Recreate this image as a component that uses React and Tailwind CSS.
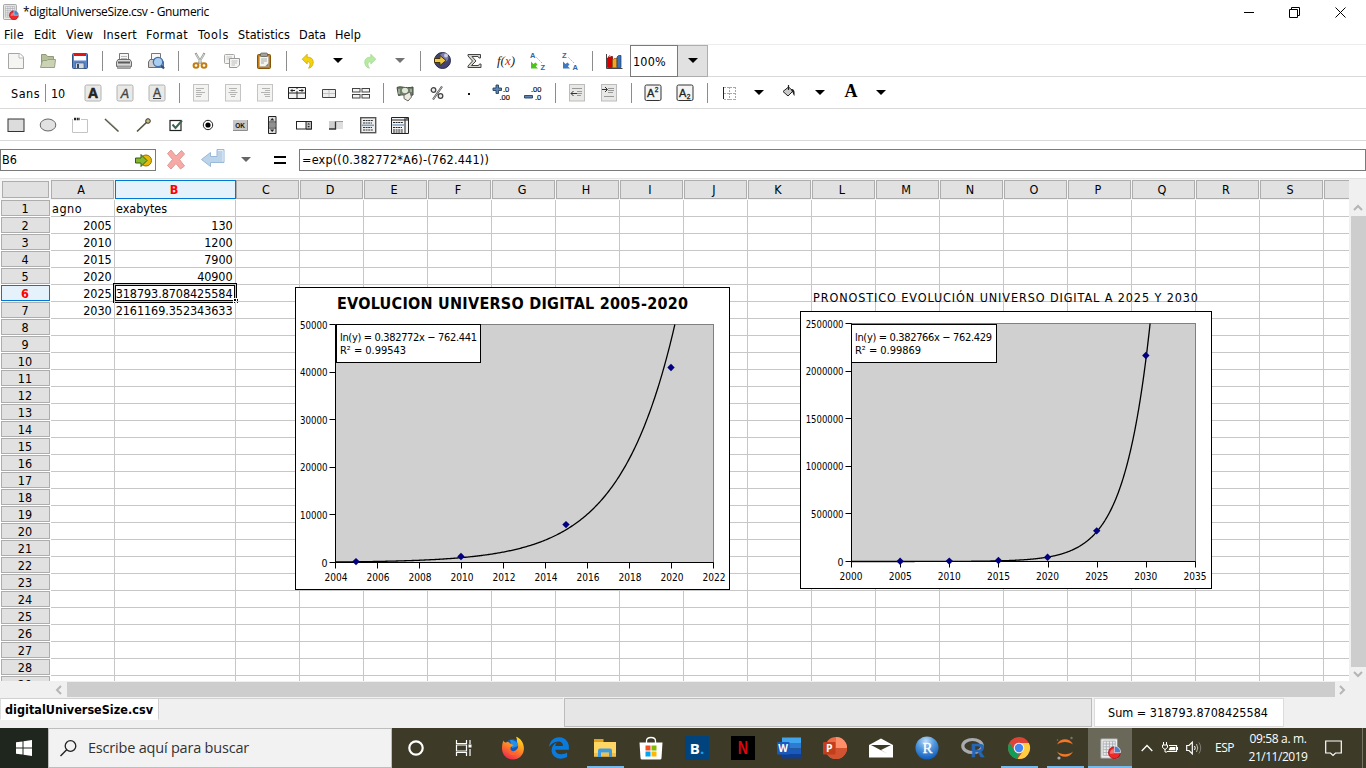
import React, { useLayoutEffect, useRef } from "react";

const UI = "font-['DejaVu_Sans_Condensed','DejaVu_Sans',sans-serif] font-stretch-condensed";
const SEGOE = "font-['Open_Sans','Noto_Sans',sans-serif] font-stretch-normal";

/* Text whose letter spacing is adjusted so that it takes exactly w pixels. */
function Fit({ w, className = "", children }) {
  const ref = useRef(null);
  useLayoutEffect(() => {
    const el = ref.current;
    el.style.letterSpacing = "0px";
    const n = el.textContent.length;
    const gap = (w - el.getBoundingClientRect().width) / n;
    el.style.letterSpacing = gap + "px";
  }, [w, children]);
  return (
    <span ref={ref} className={"inline-block whitespace-pre " + className}>
      {children}
    </span>
  );
}

function Ico({ children, s = 18, className = "" }) {
  return (
    <svg width={s} height={s} viewBox={`0 0 ${s} ${s}`} className={"shrink-0 " + className}>
      {children}
    </svg>
  );
}

const Slot = ({ children }) => <div className="flex h-full w-8 shrink-0 items-center justify-center">{children}</div>;
const Sep = () => (
  <div className="flex h-full w-3 shrink-0 items-center justify-center">
    <div className="h-5 w-px bg-[#8c8c8c]" />
  </div>
);
const Caret = ({ color = "#000" }) => (
  <div className="flex h-full w-7 shrink-0 items-center justify-center">
    <svg width="10" height="5" viewBox="0 0 10 5"><path d="M0 0H10L5 5Z" fill={color} /></svg>
  </div>
);

/* ---------- toolbar 1 ---------- */
const NewI = () => <Ico><path d="M1.5 1.5H13L16.5 5V16.5H1.5Z" fill="#f5f5f3" stroke="#a5a5a3" /><path d="M12 1.5V6H16.5" fill="#fff" stroke="#bbb" /></Ico>;
const OpenI = () => <Ico><path d="M2.5 14V2.5H7L8.5 4.5H14.5V14Z" fill="#b5bf9a" stroke="#8f9a78" /><path d="M1.5 15.5L3.5 8.5H8L9 7.500H16.500L15.500 15.500Z" fill="#ccd3b4" stroke="#97a280" /></Ico>;
const SaveI = () => (
  <Ico><rect x="1.500" y="1.500" width="15" height="15" rx="1" fill="#5b87c8" stroke="#2f548c" />
    <rect x="3" y="1" width="12" height="7.500" fill="#fff" /><rect x="3" y="1" width="12" height="3" fill="#e01616" />
    <path d="M4.500 11H13V16.500H4.500Z" fill="#d5dade" stroke="#3b4c66" strokeWidth=".6" /><rect x="6" y="12" width="2" height="4" fill="#364961" /></Ico>
);
const PrintI = () => (
  <Ico><path d="M4.500 8V1.500H13.500V8" fill="#f7f7f7" stroke="#777" /><path d="M6 4.500H12M6 6.500H12" stroke="#bbb" />
    <path d="M1.500 10L3 7.500H15L16.500 10V14.500H1.500Z" fill="#d8d8d8" stroke="#6d6d6d" /><path d="M3 10.500H15" stroke="#5b5b5b" strokeWidth="2" /><rect x="2.500" y="14" width="13" height="2.500" fill="#aaa" stroke="#777" strokeWidth=".6" /></Ico>
);
const PreviewI = () => (
  <Ico><path d="M4.500 8V1.500H13.500V8" fill="#f7f7f7" stroke="#777" /><path d="M1.500 10L3 7.500H15L16.500 10V15.500H1.500Z" fill="#d0d0d0" stroke="#6d6d6d" />
    <circle cx="11" cy="10" r="4.700" fill="#a9cdf0" stroke="#4471a8" strokeWidth="1.300" /><path d="M14.300 13.500L17 16.500" stroke="#2b5288" strokeWidth="2.200" /></Ico>
);
const CutI = () => (
  <Ico><path d="M4.500 1L10.500 11.500M13.500 1L7.500 11.500" stroke="#989e97" strokeWidth="2.200" /><path d="M5 2L10 11M13 2L8 11" stroke="#e2e4e0" strokeWidth=".8" />
    <ellipse cx="5" cy="13.500" rx="2.400" ry="2.200" fill="none" stroke="#c17d11" strokeWidth="2" /><ellipse cx="13" cy="13.500" rx="2.400" ry="2.200" fill="none" stroke="#c17d11" strokeWidth="2" /></Ico>
);
const CopyI = () => (
  <Ico><rect x="1.500" y="2.500" width="10" height="9" rx="1" fill="#f3f3f1" stroke="#a9a9a7" /><path d="M3.500 5H9M3.500 7H9" stroke="#c5c5c5" />
    <path d="M6.500 6.500H16.500V13L14 15.500H6.500Z" fill="#f5f5f3" stroke="#999" /><path d="M8.500 9H14.500M8.500 11H14M8.500 13H12" stroke="#bdbdbd" /></Ico>
);
const PasteI = () => (
  <Ico><rect x="2.500" y="2.500" width="13" height="14" rx="1" fill="#c17d11" stroke="#865307" /><rect x="4.500" y="4.500" width="9" height="10" fill="#f4f4f1" stroke="#aaa" strokeWidth=".5" />
    <rect x="5.500" y="1" width="7" height="3.500" rx="1" fill="#a0a19c" stroke="#595a56" strokeWidth=".7" /><path d="M6 7H12M6 9H12M6 11H9" stroke="#aaa" /><path d="M10 14.500L13.500 11V14.500Z" fill="#888a85" /></Ico>
);
const UndoI = ({ c = "#f4d20c", s = "#c3a000", flip }) => (
  <Ico className={flip ? "-scale-x-100" : ""}><path d="M3.200 7.200L8.200 2.200V5.200C13 4.800 15.300 8.500 13.800 12.500C13 14.800 11.500 16 9.500 16.200C11.600 13.500 11.800 9.800 8.200 9.600V12Z" fill={c} stroke={s} strokeWidth=".7" /></Ico>
);
const GlobeI = () => (
  <Ico s={19}><circle cx="9.500" cy="9.500" r="8" fill="#43436f" stroke="#27274b" /><circle cx="11" cy="6.500" r="4.500" fill="#8e8fbd" opacity=".75" /><circle cx="13" cy="4.500" r="2" fill="#e1e1f2" opacity=".8" />
    <path d="M1.500 7.500H7V4.500L13 9.500L7 14.500V11.500H1.500Z" fill="#efc846" stroke="#40330d" /></Ico>
);
const SumI = () => <Ico><path d="M3 2.500H15.500V6H14L13 4.500H7L11 9L6.500 13.500H13.500L14.500 12H16V15.500H3V14L7.500 9L3 4Z" fill="#d4d4c8" stroke="#444" /></Ico>;
const Arr = ({ c }) => <path d="M2 9.500V16.500H9L6.800 14.300L8.500 12.600L6.500 10.500L4.500 12Z" fill={c} />;
const SortI = ({ a, b, c }) => (
  <Ico><g className="font-['Liberation_Sans',sans-serif] font-bold"><text x="1" y="6" fontSize="7.500" fill="#3465a4">{a}</text><text x="11.500" y="17.500" fontSize="7.500" fill="#3465a4">{b}</text></g>
    <path d="M7.500 5.500L13 11" stroke="#7fa0cc" strokeDasharray="1.500 1.500" /><Arr c={c} /></Ico>
);
const ChartI = () => (
  <Ico><path d="M1.500 2V16.500H17.500" stroke="#444" fill="none" /><path d="M2.500 6L4.500 4.500H7.500V15.500H2.500Z" fill="#d40000" stroke="#6d0000" strokeWidth=".7" /><path d="M3 5L5 3.500L6.500 5" fill="#fbb" stroke="#800" strokeWidth=".5" />
    <path d="M7.500 8L9 6.500H12V15.500H7.500Z" fill="#f5a524" stroke="#8f5902" strokeWidth=".7" /><path d="M12 5L13.500 3.500H16V15.500H12Z" fill="#3a71b5" stroke="#1a3c6c" strokeWidth=".7" /></Ico>
);

/* ---------- toolbar 2 ---------- */
const Boxed = ({ children }) => <Ico s={18}><rect x="1" y="1" width="16" height="16" rx="1.500" fill="#e9e9e7" stroke="#b2b2b0" />{children}</Ico>;
const BoldI = () => <Boxed><text x="9" y="14" fontSize="14" textAnchor="middle" fill="#222" stroke="#222" strokeWidth=".6" className="font-['Liberation_Sans',sans-serif] font-bold">A</text></Boxed>;
const ItalicI = () => <Boxed><text x="9" y="13.500" fontSize="12.500" textAnchor="middle" fill="#444" stroke="#444" strokeWidth=".4" className="font-['Liberation_Sans',sans-serif] italic">A</text></Boxed>;
const UnderI = () => <Boxed><text x="9" y="12.500" fontSize="12" textAnchor="middle" fill="#444" stroke="#444" strokeWidth=".4" className="font-['Liberation_Sans',sans-serif]">A</text><path d="M5 14.500H13" stroke="#333" /></Boxed>;
const AlignI = ({ k }) => {
  const d = { l: "M4 4.500H12M4 6.500H9M4 8.500H13M4 10.500H10M4 12.500H9", c: "M5 4.500H13M6.500 6.500H11.500M4.500 8.500H13.500M6 10.500H12M7 12.500H11", r: "M6 4.500H14M9 6.500H14M5 8.500H14M8 10.500H14M9 12.500H14" }[k];
  return <Ico><rect x="1.500" y=".5" width="15" height="16.500" fill="#f3f3f2" stroke="#c4c4c2" /><path d={d} stroke="#b4b4b2" /></Ico>;
};
const CenterAcross = () => <Ico><path d="M.5 3.500H17.500V14.500H.5ZM.5 9H17.500M9 9V14.500M9 3.500V5M9 7V9" fill="#f2f2f2" stroke="#222" /><path d="M3 6.500H7M11 6.500H15" stroke="#222" /><path d="M2 6.500L4.500 5V8ZM16 6.500L13.500 5V8Z" fill="#222" /></Ico>;
const MergeI = () => <Ico><path d="M2.500 5.500H15.500V13.500H2.500Z" fill="#eee" stroke="#444" /><path d="M9 6V13M3 9.500H15" stroke="#c2c2c2" /></Ico>;
const SplitI = () => <Ico>{[[.5, 4.500], [10, 4.500], [.5, 10.500], [10, 10.500]].map(([x, y]) => <rect key={x + "-" + y} x={x} y={y} width="7.500" height="3.500" fill="#f3f3f3" stroke="#444" />)}</Ico>;
const MoneyI = () => (
  <Ico><path d="M1 3.500C5 1.500 9 5 17 3V11C12 13 7 9.500 2.500 11.500Z" fill="#70806a" stroke="#3f4a3c" /><ellipse cx="9" cy="6.500" rx="3" ry="2.700" fill="#dfe8d8" /><path d="M3 5V10M15 5V8" stroke="#cbd6c4" />
    <path d="M8 11L14 8L15.500 13L12 17L8 14.500Z" fill="#ece9dd" stroke="#666" /></Ico>
);
const PercentI = () => <Ico><path d="M14 2.500L5 15.500" stroke="#444" strokeWidth="2" /><path d="M14 2.500L5 15.500" stroke="#eee" strokeWidth=".7" /><circle cx="5.500" cy="6" r="2.300" fill="#eee" stroke="#444" strokeWidth="1.300" /><circle cx="12.500" cy="12" r="2.300" fill="#eee" stroke="#444" strokeWidth="1.300" /></Ico>;
const DecI = ({ plus }) => (
  <Ico><path d={plus ? "M4 1H6.500V4H9.500V6.500H6.500V9.500H4V6.500H1V4H4Z" : "M.5 11.500H8.500V14H.5Z"} fill="#5c84b4" stroke="#26415f" strokeWidth=".9" />
    <g className="font-['Liberation_Sans',sans-serif]" fontSize="7.500" fill="#111" stroke="#111" strokeWidth=".2"><text x={plus ? 11 : 7} y="8">{plus ? ".0" : ".00"}</text><text x={plus ? 7.500 : 11} y="15.500">{plus ? ".00" : ".0"}</text></g></Ico>
);
const IndentI = ({ right }) => (
  <Ico><rect x="1.500" y=".5" width="15" height="16.500" fill="#e8e8e6" stroke="#bcbcba" /><path d={right ? "M8 4.500H14M8 6.500H14M8 8.500H13M4 12.500H14" : "M4 4.500H14M9 7.500H14M9 9.500H14M9 11.500H13"} stroke="#999" />
    {right ? <path d="M2 5.500H7M5 3L7.500 5.500L5 8" stroke="#333" fill="none" /> : <path d="M9 9.500H3M5.500 7L3 9.500L5.500 12" stroke="#333" fill="none" />}</Ico>
);
const SupI = ({ sub }) => (
  <Ico><rect x="1" y="1" width="16" height="15.500" rx="1.500" fill="#f4f4f4" stroke="#333" /><g className="font-['Liberation_Sans',sans-serif]" fill="#222"><text x="3" y="12.500" fontSize="11" stroke="#222" strokeWidth=".3">A</text><text x="10.800" y={sub ? 14.500 : 8} fontSize="6.500" stroke="#222" strokeWidth=".3">2</text></g></Ico>
);
const BorderI = () => <Ico><path d="M3.500 3V15" stroke="#222" /><path d="M4 3.500H16M4 9.500H16M4 15.500H16M9.500 3V16M15.500 3V16" stroke="#a8a8a8" strokeDasharray="2 1" fill="none" /></Ico>;
const BucketI = () => <Ico s={14}><path d="M1 7.500L6.500 3L11 7L6 12Z" fill="#c9c9c9" stroke="#222" /><path d="M6.500 6V1" stroke="#222" strokeWidth="1.200" /><path d="M9 5C12 5 13 6.500 12.500 12C11 11 11 8 9.500 7Z" fill="#222" /></Ico>;

/* ---------- toolbar 3 ---------- */
const T3 = [
  <Ico><rect x="1" y="3" width="16" height="12.500" fill="#dcdcdc" stroke="#333" /></Ico>,
  <Ico><ellipse cx="9" cy="9" rx="7.800" ry="6" fill="#e2e2e2" stroke="#666" /></Ico>,
  <Ico><path d="M1.500 3V16.500H16.500V3.500H10" fill="none" stroke="#c4c4c4" /><path d="M3 3H9" stroke="#222" strokeWidth="2.500" strokeDasharray="2 .7" /></Ico>,
  <Ico><path d="M2 3L15.500 15.500" stroke="#55564a" strokeWidth="1.700" /><path d="M2.500 2.500L15.500 14.500" stroke="#b4b39d" strokeWidth=".6" /></Ico>,
  <Ico><path d="M2 15.500L14 4" stroke="#56533f" strokeWidth="1.700" /><circle cx="13" cy="5" r="2.300" fill="#cabc78" stroke="#333" /></Ico>,
  <Ico><rect x="3" y="4.500" width="11" height="10" fill="#fff" stroke="#222" strokeWidth="1.200" /><path d="M5.500 8.500L8.500 12L15 4.500" stroke="#3c6651" strokeWidth="2" fill="none" /></Ico>,
  <Ico><circle cx="9" cy="9" r="4.700" fill="#fff" stroke="#222" /><circle cx="9" cy="9" r="2.600" fill="#000" /></Ico>,
  <Ico><path d="M2 4H16V14.500H2Z" fill="#c7c7c7" /><path d="M2 14.500H16.500V4" stroke="#8d8d8d" fill="none" /><text x="9" y="12" fontSize="6.500" textAnchor="middle" fill="#111" className="font-['Liberation_Sans',sans-serif] font-bold">OK</text></Ico>,
  <Ico><path d="M5.500 .5H13V17.500H5.500ZM5.500 6H13M5.500 12H13" fill="#ddd" stroke="#222" /><path d="M7 4.500L9.200 2L11.400 4.500ZM7 13.500H11.400L9.200 16Z" fill="#222" /><path d="M6 8H12.500M6 10H12.500" stroke="#444" /></Ico>,
  <Ico><rect x="1.500" y="5.500" width="15" height="7.500" fill="#fff" stroke="#222" /><path d="M11 5.500H16.500V13H11Z" fill="#bbb" stroke="#222" /><path d="M12.500 8.500L13.700 7L14.900 8.500ZM12.500 10H14.900L13.700 11.500Z" fill="#222" /></Ico>,
  <Ico><rect x="2" y="5" width="14" height="8" fill="#dedede" /><rect x="2" y="5" width="7" height="8" fill="#cfcfcf" /><path d="M2 13H8.500V5.500" stroke="#333" fill="none" strokeWidth="1.300" /><path d="M9 5.500H16" stroke="#999" /></Ico>,
  <Ico><rect x="1.700" y="1.700" width="15" height="15" fill="#eee" stroke="#555" strokeWidth="1.400" /><path d="M4 4.500H14M4 7H13M4 11.500H13M4 14H14" stroke="#333" strokeDasharray="2 .6" /><path d="M3 9.300H15" stroke="#7f9fc0" strokeWidth="1.500" /></Ico>,
  <Ico><path d="M.5 1.500H17.500V17.500H.5ZM.5 4H17.500M14 1.500V17.500" fill="#f5f5f5" stroke="#222" /><path d="M2 6.500H12M2 11.500H11M2 14H12M2 16H12" stroke="#222" strokeDasharray="2 .6" /><path d="M1.500 9H13" stroke="#7f9fc0" strokeWidth="1.500" /><path d="M15 2.800H17" stroke="#222" /></Ico>,
];

const GnumI = ({ s = 16 }) => (
  <svg width={s} height={s} viewBox="0 0 20 20" className="shrink-0">
    <rect x=".7" y=".7" width="16" height="18.600" rx="1" fill="#eeeeec" stroke="#8f918c" />
    <path d="M3 3H14.500V16.500H3ZM3 5.700H14.500M3 8.400H14.500M3 11.100H14.500M3 13.800H14.500M6 3V16.500M9 3V16.500M12 3V16.500" fill="none" stroke="#a3aab2" strokeWidth=".8" />
    <circle cx="13.700" cy="14" r="5.600" fill="#ef2929" stroke="#a40000" strokeWidth=".7" /><path d="M13.700 14V7.700A6 6 0 0 1 19.700 14Z" fill="#4d84c4" stroke="#fff" strokeWidth=".6" /><path d="M9.500 15A4.500 4.500 0 0 1 13 10.500L13.300 14.800Z" fill="#fff" opacity=".35" />
  </svg>
);

/* ---------- sheet ---------- */
const COLS = "ABCDEFGHIJKLMNOPQRST".split("");
const DATA = [
  ["agno", "exabytes"], ["2005", "130"], ["2010", "1200"], ["2015", "7900"], ["2020", "40900"],
  ["2025", "318793.8708425584"], ["2030", "2161169.352343633"],
];
const DIGIT = 7.06;

function Cell({ r, c }) {
  const v = DATA[r] && DATA[r][c];
  const selected = r === 5 && c === 1;
  const w = v && (r === 0 ? [30, 51][c] : v.length * DIGIT - (v.includes(".") ? 3.200 : 0));
  return (
    <div className={"relative h-[17px] shrink-0 border-r border-b border-[#c7c7c7] pt-px leading-4 " + (c === 1 ? "w-[121px] " : "w-[64px] ") + (r === 0 ? "pl-[1px] text-left" : "pr-[2.5px] text-right")}>
      {v && <div className={"flex h-4 " + (r === 0 ? "justify-start" : "justify-end")}><Fit w={w}>{v}</Fit></div>}
      {selected && (
        <>
          <div className="absolute -left-[2px] -top-[2px] h-[20px] w-[124px] border border-black" />
          <div className="absolute left-0 top-0 h-[16px] w-[120px] border border-black" />
          <div className="absolute left-[118px] top-[13px] grid h-[6px] w-[6px] grid-cols-2 gap-px bg-white p-px">
            <i className="bg-black" /><i className="bg-black" /><i className="bg-black" /><i className="bg-black" />
          </div>
        </>
      )}
    </div>
  );
}

function Sheet() {
  return (
    <div className="relative h-[502px] w-[1349px] shrink-0 overflow-hidden bg-white">
      <div className="flex h-[21px] bg-[#f5f5f5] pt-px">
        <div className="ml-[2px] mt-px mr-[2px] h-[17px] w-[47px] shrink-0 border border-[#adadad] bg-[#e1e1e1]" />
        {COLS.map((l, i) => (
          <div key={l} className={"h-[19px] shrink-0 border pr-[3px] text-center leading-[18px] " + (i === 1 ? "w-[121px] border-[#0078d7] bg-[#e5f1fb] font-bold text-[#f00]" : "mr-px w-[63px] border-[#adadad] bg-[#e1e1e1]")}>{l === "T" ? null : l}</div>
        ))}
      </div>
      {Array.from({ length: 29 }, (_, r) => (
        <div key={r} className="flex h-[17px]">
          <div className={"ml-px mr-px h-4 w-[49px] shrink-0 border pr-px text-center leading-[15px] " + (r === 5 ? "border-[#0078d7] bg-[#e5f1fb] font-bold text-[#f00]" : "border-[#adadad] bg-[#e1e1e1]")}>{r + 1}</div>
          {COLS.map((l, c) => <Cell key={l} r={r} c={c} />)}
        </div>
      ))}
      <div className="absolute left-[295px] top-[108px]"><Chart1 /></div>
      <div className="absolute left-[800px] top-[108px]"><Chart2 /></div>
    </div>
  );
}

/* Scatter chart with an exponential regression; coordinates are those of the window. */
function Chart({ view, frame, plot, xs, ymax, ystep, pts, fit, lines, box, yw, lx, children }) {
  const [x0, y0, x1, y1] = plot;
  const [xmin, xmax, xstep] = xs;
  const X = (v) => x0 + ((v - xmin) / (xmax - xmin)) * (x1 - x0);
  const Y = (v) => y1 - (v / ymax) * (y1 - y0);
  const path = [];
  for (let v = xmin; v <= xmax; v += 0.05) {
    const f = Math.exp(fit[0] * v - fit[1]);
    if (f > ymax) { path.push([X((Math.log(ymax) + fit[1]) / fit[0]), y0]); break; }
    path.push([X(v), Y(f)]);
  }
  const xt = [], yt = [];
  for (let v = xmin; v <= xmax; v += xstep) xt.push(v);
  for (let v = 0; v <= ymax; v += ystep) yt.push(v);
  return (
    <svg width={view[2]} height={view[3]} viewBox={view.join(" ")} className={UI + " block text-[11px]"}>
      <rect x={frame[0]} y={frame[1]} width={frame[2]} height={frame[3]} fill="#fff" stroke="#000" />
      <rect x={x0} y={y0} width={x1 - x0} height={y1 - y0} fill="#d0d0d0" stroke="#808080" />
      <path d={"M" + path.map((p) => p[0].toFixed(2) + " " + p[1].toFixed(2)).join("L")} fill="none" stroke="#000" strokeWidth="1.300" />
      <path d={`M${x0} ${y0}V${y1}H${x1}` + xt.map((v) => `M${Math.floor(X(v)) + 0.5} ${y1}v6`).join("") + yt.map((v) => `M${x0} ${Math.floor(Y(v)) + 0.5}h-6`).join("")} fill="none" stroke="#000" />
      {pts.map(([a, b]) => <path key={a} d={`M${X(a) - 0.5} ${Y(b) - 4}l3.700 3.700l-3.700 3.700l-3.700 -3.700Z`} fill="#000080" />)}
      {xt.map((v) => <text key={v} x={X(v) - lx} y={y1 + 18.500} textLength="23" lengthAdjust="spacingAndGlyphs">{v}</text>)}
      {yt.map((v) => { const w = v ? String(v).length * yw : 6; return <text key={v} x={x0 - 8 - w} y={Y(v) + 4} textLength={w} lengthAdjust="spacingAndGlyphs">{v}</text>; })}
      <rect x={box[0]} y={box[1]} width={box[2]} height={box[3]} fill="#fff" stroke="#000" />
      <text x={box[0] + 3.500} y={box[1] + 16} textLength="137" lengthAdjust="spacing">{lines[0]}</text>
      <text x={box[0] + 3.500} y={box[1] + 29.500} textLength="66" lengthAdjust="spacing">{lines[1]}</text>
      {children}
    </svg>
  );
}

const Chart1 = () => (
  <Chart view={[295, 287, 436, 304]} frame={[295.5, 287.5, 434, 302]} plot={[335.5, 324.5, 713.5, 562.5]} xs={[2004, 2022, 2]} ymax={50000} ystep={10000} yw={5.500} lx={11}
    pts={[[2005, 130], [2010, 1200], [2015, 7900], [2020, 40900]]} fit={[0.382772, 762.441]} box={[336.500, 324.500, 144, 38]} lines={["ln(y) = 0.382772x − 762.441", "R² = 0.99543"]}>
    <text x="337" y="309" fontSize="16" textLength="351" className="font-bold">EVOLUCION UNIVERSO DIGITAL 2005-2020</text>
  </Chart>
);
const Chart2 = () => (
  <Chart view={[800, 287, 413, 303]} frame={[800.5, 311.5, 411, 277]} plot={[851.5, 323.5, 1195.5, 561.5]} xs={[2000, 2035, 5]} ymax={2500000} ystep={500000} yw={5.400} lx={12}
    pts={[[2005, 130], [2010, 1200], [2015, 7900], [2020, 40900], [2025, 318793.87], [2030, 2161169.35]]} fit={[0.382766, 762.429]} box={[851.500, 324.500, 145, 38]} lines={["ln(y) = 0.382766x − 762.429", "R² = 0.99869"]}>
    <text x="813" y="302" fontSize="12.500" textLength="385">PRONOSTICO EVOLUCIÓN UNIVERSO DIGITAL A 2025 Y 2030</text>
  </Chart>
);

const Chev = ({ d, className = "" }) => <svg width="10" height="10" viewBox="0 0 10 10" className={className}><path d={d} fill="none" stroke="#b5b5b5" strokeWidth="2" /></svg>;

/* ---------- taskbar ---------- */
const Task = ({ children, line }) => (
  <div className="flex h-10 w-[46px] shrink-0 flex-col items-center">
    <div className="flex h-[38px] items-center pt-[2px]">{children}</div>
    {line && <div className="h-[2px] w-[37px] bg-[#76b9ed]" />}
  </div>
);
const Firefox = () => (
  <Ico s={24}><defs><linearGradient id="ff" x1=".8" y1="0" x2=".3" y2="1"><stop offset="0" stopColor="#ffe226" /><stop offset=".45" stopColor="#ff9020" /><stop offset="1" stopColor="#f0264f" /></linearGradient></defs>
    <circle cx="12" cy="12.500" r="9.500" fill="#1557b8" /><path d="M9 4C13 3.500 17 6 17.500 10L11 12Z" fill="#2391e8" />
    <path d="M2.500 4.500C3 6 4 6.500 5 6.500C6.500 5.500 8 6 9 7.500L12.500 9L9.500 11.500C9 15 12 16 14.500 14.500C18 13 17.500 8.500 16 6C16 4 15.800 2 15 .8C19 2 22.800 6.500 22.900 12C23 19 18 23.500 12 23.500C5.500 23.500 1 18.500 1 12.500C1 9 1.500 6.500 2.500 4.500Z" fill="url(#ff)" />
    <path d="M6.500 13C8 18.500 15 18 17 14C16 20.500 8 21.500 6.500 13Z" fill="#ff6a28" opacity=".7" /></Ico>
);
const Edge = () => (
  <svg width="22" height="22" viewBox="0 0 512 512"><path fill="#0a7bdc" d="M25.714 228.163c.111-.162.23-.323.342-.485-.021.162-.045.323-.065.485h-.277zm460.572 15.508c0-44.032-7.754-84.465-28.801-122.405C416.498 47.879 343.912 8.001 258.893 8.001 118.962 7.724 40.617 113.214 26.056 227.679c42.429-61.312 117.073-121.376 220.375-124.966 0 0 109.666 0 99.419 104.957H169.997c6.369-37.386 18.554-58.986 34.339-78.926-75.048 34.9-121.85 96.096-120.742 188.315.83 71.448 50.124 144.836 120.743 171.976 83.357 31.847 192.776 7.2 240.132-21.324V363.307c-80.864 56.494-270.871 60.925-272.255-67.572h314.073v-52.064z" /></svg>
);
const Folder = () => <Ico s={24}><path d="M1 3H10V6H23V20.500H1Z" fill="#ffd664" /><path d="M1 3H10.500V6H1Z" fill="#e0a21b" /><path d="M1 17V20.500H23V17Z" fill="#f2c04a" /><path d="M5 21V14.500Q5 12.500 7 12.500H17Q19 12.500 19 14.500V21H16V16.500H8V21Z" fill="#3f9be0" /></Ico>;
const Store = () => (
  <Ico s={24}><path d="M7.500 8V5Q7.500 1.500 12 1.500Q16.500 1.500 16.500 5V8" fill="none" stroke="#fff" strokeWidth="1.300" /><path d="M.5 6.500H23.500L22.500 22Q22.500 23.500 21 23.500H3Q1.500 23.500 1.500 22Z" fill="#fff" />
    <path d="M6.500 9.500H11.500V14.500H6.500Z" fill="#f25022" /><path d="M12.500 9.500H17.500V14.500H12.500Z" fill="#7fba00" /><path d="M6.500 15.500H11.500V20.500H6.500Z" fill="#00a4ef" /><path d="M12.500 15.500H17.500V20.500H12.500Z" fill="#ffb900" /></Ico>
);
const Word = () => <Ico s={24}><path d="M5 1.500H24V7H5Z" fill="#41a5ee" /><path d="M5 7H24V12.500H5Z" fill="#2b7cd3" /><path d="M5 12.500H24V18H5Z" fill="#185abd" /><path d="M5 18H24V22.500H5Z" fill="#103f91" /><rect y="6" width="12.500" height="12.500" rx="1" fill="#185abd" /><text x="6.200" y="15.700" textAnchor="middle" fontSize="10" fill="#fff" className="font-['Open_Sans',sans-serif] font-bold">W</text></Ico>;
const Ppt = () => <Ico s={24}><circle cx="13" cy="12" r="11" fill="#ed6c47" /><path d="M13 1A11 11 0 0 1 24 12H13Z" fill="#ff8f6b" /><path d="M2 12H24A11 11 0 0 1 2 12Z" fill="#d35230" /><rect y="6" width="12.500" height="12.500" rx="1" fill="#c43e1c" /><text x="6.200" y="16" textAnchor="middle" fontSize="10.500" fill="#fff" className="font-['Open_Sans',sans-serif] font-bold">P</text></Ico>;
const Mail = () => <Ico s={24}><path d="M0 9L12 2.500L24 9V21.500H0Z" fill="#fff" /><path d="M2 9H22L12 14L18 17.500Z" fill="#3d3a28" /></Ico>;
const RStudio = () => <Ico s={24}><defs><radialGradient id="rs" cx=".45" cy=".2" r=".85"><stop offset="0" stopColor="#bedcf8" /><stop offset=".45" stopColor="#5197dd" /><stop offset="1" stopColor="#0855b6" /></radialGradient></defs><circle cx="12" cy="12" r="11.500" fill="url(#rs)" /><text x="12.500" y="17" textAnchor="middle" fontSize="15" fill="#fff" stroke="#fff" strokeWidth=".3" className="font-['Liberation_Serif',serif]">R</text></Ico>;
const RLogo = () => <Ico s={24}><ellipse cx="11.500" cy="10" rx="9.700" ry="6.500" fill="none" stroke="#a9abb1" strokeWidth="3.200" /><text x="10" y="21" fontSize="19" fill="#2467b9" stroke="#2467b9" strokeWidth=".5" className="font-['Liberation_Sans',sans-serif] font-bold">R</text></Ico>;
const Chrome = () => (
  <Ico s={24}><circle cx="12" cy="12" r="11" fill="#db4437" /><path d="M2.500 6.500L7.200 14.800L12 17.500L10.500 22.900A11 11 0 0 1 2.500 6.500Z" fill="#0f9d58" /><path d="M12 7H21.800A11 11 0 0 1 10.500 22.900L16.500 14.500Z" fill="#ffcd40" /><circle cx="12" cy="12" r="5.300" fill="#f1f1f1" /><circle cx="12" cy="12" r="4.200" fill="#4285f4" /></Ico>
);
const Jupyter = () => <Ico s={24}><path d="M4 8.500C7 1.500 17 1.500 20 8.500C16 5 8 5 4 8.500ZM4 15.500C8 19 16 19 20 15.500C17 22.500 7 22.500 4 15.500Z" fill="#f37726" /><circle cx="18.500" cy="2" r="1.200" fill="#767677" /><circle cx="6" cy="22" r="1.600" fill="#a9a9a9" /><circle cx="4.500" cy="4" r=".8" fill="#767677" /></Ico>;

function Taskbar() {
  return (
    <div className={SEGOE + " flex h-10 items-center bg-[#3d3a28] text-white"}>
      <div className="flex h-10 w-12 shrink-0 items-center justify-center bg-[#1e261d]">
        <svg width="16" height="16" viewBox="0 0 16 16"><path d="M0 2.300L6.500 1.400V7.500H0ZM7.500 1.200L16 0V7.500H7.500ZM0 8.500H6.500V14.600L0 13.700ZM7.500 8.500H16V16L7.500 14.800Z" fill="#fff" /></svg>
      </div>
      <div className="flex h-10 w-[344px] shrink-0 items-center border border-[#bdbdbd] bg-[#f2f2f2] pl-[11px] text-[#333]">
        <svg width="17" height="17" viewBox="0 0 17 17"><circle cx="10.500" cy="6" r="5.300" fill="none" stroke="#222" strokeWidth="1.300" /><path d="M6.700 9.800L.5 16" stroke="#222" strokeWidth="1.400" /></svg>
        <Fit w={161} className="ml-[11px] text-[14.5px] leading-5">Escribe aquí para buscar</Fit>
      </div>
      <div className="flex w-12 shrink-0 justify-center"><Ico s={18}><circle cx="9" cy="9" r="6.700" fill="none" stroke="#fff" strokeWidth="2.200" /></Ico></div>
      <div className="mr-[2px] flex w-12 shrink-0 justify-center">
        <Ico s={18}><path d="M1.500 1V4.500H11.500V1M1.500 17V13.500H11.500V17M1.500 6H11.500V12H1.500ZM15 1V5M15 10V17" fill="none" stroke="#fff" strokeWidth="1.200" /><rect x="13.500" y="5.500" width="3" height="3" fill="#fff" /></Ico>
      </div>
      <Task><Firefox /></Task>
      <Task><Edge /></Task>
      <Task line><Folder /></Task>
      <Task><Store /></Task>
      <Task><div className="flex h-6 w-6 items-center justify-center bg-[#00437d] text-[15px] font-bold leading-6">B<span className="text-[#12a5e8]">.</span></div></Task>
      <Task><div className="flex h-6 w-6 items-center justify-center bg-black"><span className="scale-x-75 font-['Liberation_Sans',sans-serif] text-[19px] font-bold leading-6 text-[#d8070f]">N</span></div></Task>
      <Task><Word /></Task>
      <Task><Ppt /></Task>
      <Task><Mail /></Task>
      <Task><RStudio /></Task>
      <Task><RLogo /></Task>
      <Task line><Chrome /></Task>
      <Task line><Jupyter /></Task>
      <div className="flex h-10 w-11 shrink-0 items-center justify-center border-b-2 border-[#76b9ed] bg-[#6a6858] pt-[2px]"><GnumI s={21} /></div>
      <div className="flex h-10 flex-1 items-center">
        <svg width="12" height="8" viewBox="0 0 12 8" className="ml-[9px]"><path d="M.7 7L6 1.500L11.300 7" fill="none" stroke="#fff" strokeWidth="1.300" /></svg>
        <svg width="17" height="12" viewBox="0 0 17 12" className="ml-[9px]"><path d="M7 3.500H14.500V9.500H5" fill="none" stroke="#fff" strokeWidth="1.200" /><path d="M8 5H13.300V8.200H6.500Z" fill="#fff" /><path d="M15.500 5V8M1.500 0V3M4.500 0V3M.5 3H5.500V5.500L3 7.500L.5 5.500ZM3 7V10H5" fill="none" stroke="#fff" /></svg>
        <svg width="17" height="14" viewBox="0 0 17 14" className="ml-[7px]"><path d="M.7 4.500H3L6.300 1.200V12.800L3 9.500H.7Z" fill="none" stroke="#fff" strokeWidth="1.200" /><path d="M8.500 5Q10 7 8.500 9" fill="none" stroke="#fff" /><path d="M10.500 3Q13 7 10.500 11" fill="none" stroke="#bbb" /><path d="M13 1.500Q16.500 7 13 12.500" fill="none" stroke="#817f73" /></svg>
        <Fit w={19} className="ml-[12px] text-[12px] leading-4">ESP</Fit>
        <div className="ml-[14px] flex w-[60px] flex-col items-center pb-px text-[12px] leading-[18px]">
          <Fit w={57}>09:58 a. m.</Fit>
          <Fit w={59}>21/11/2019</Fit>
        </div>
        <svg width="17" height="17" viewBox="0 0 17 17" className="ml-[17px]"><path d="M.7 1H16.300V13H10.500L8 15.500L5.500 13H.7Z" fill="none" stroke="#fff" strokeWidth="1.200" /></svg>
        <div className="ml-auto mr-[3px] h-10 w-px bg-[#77756a]" />
      </div>
    </div>
  );
}

const MENU = [
  ["File", 20, "w-[30px]"], ["Edit", 22, "w-[32px]"], ["View", 27, "w-[37px]"], ["Insert", 34, "w-[43px]"], ["Format", 42, "w-[52px]"],
  ["Tools", 31, "w-[40px]"], ["Statistics", 52, "w-[61px]"], ["Data", 27, "w-[36px]"], ["Help", 26, "w-[30px]"],
];

export default function App() {
  return (
    <div className={UI + " flex h-[768px] w-[1366px] flex-col overflow-hidden bg-white text-[12.5px] text-black"}>
      <div className="flex h-6 shrink-0 items-center pl-[3px]">
        <GnumI s={16} />
        <Fit w={186} className={SEGOE + " ml-[4px] text-[12px] leading-4"}>*digitalUniverseSize.csv - Gnumeric</Fit>
        <div className="ml-auto flex items-center pr-[20px]">
          <svg width="11" height="11" viewBox="0 0 11 11"><path d="M0 5.500H10" stroke="#000" /></svg>
          <svg width="11" height="11" viewBox="0 0 11 11" className="ml-[34px]"><path d="M.5 2.500H8.500V10.500H.5ZM2.500 2.500V.5H10.500V8.500H8.500" fill="none" stroke="#000" /></svg>
          <svg width="11" height="11" viewBox="0 0 11 11" className="ml-[35px]"><path d="M.5 .5L10.500 10.500M10.500 .5L.5 10.500" stroke="#000" /></svg>
        </div>
      </div>
      <div className="flex h-[21px] shrink-0 items-center border-b border-[#ededed] pl-[4px]">
        {MENU.map(([t, w, slot]) => <div key={t} className={"shrink-0 pt-px " + slot}><Fit w={w} className="text-[12.5px] leading-5">{t}</Fit></div>)}
      </div>
      <div className="flex h-8 shrink-0 items-center border-b border-[#dadada]">
        <Slot><NewI /></Slot><Slot><OpenI /></Slot><Slot><SaveI /></Slot><Sep />
        <Slot><PrintI /></Slot><Slot><PreviewI /></Slot><Sep />
        <Slot><CutI /></Slot><Slot><CopyI /></Slot><Slot><PasteI /></Slot><Sep />
        <Slot><UndoI /></Slot><Caret /><div className="w-[2px]" /><Slot><UndoI c="#b5eaa0" s="#a3d492" flip /></Slot><Caret color="#737373" /><Sep />
        <Slot><GlobeI /></Slot><Slot><SumI /></Slot>
        <Slot><span className="font-['Liberation_Serif',serif] text-[13px] italic text-[#222]">f(<span className="text-[#e02020]">x</span>)</span></Slot>
        <Slot><SortI a="A" b="Z" c="#4fc31b" /></Slot><Slot><SortI a="Z" b="A" c="#3f79bf" /></Slot><Sep />
        <Slot><ChartI /></Slot>
        <div className="flex h-8 w-12 shrink-0 items-center border border-[#7a7a7a] bg-white pl-[2px] pt-[3px]"><Fit w={33}>100%</Fit></div>
        <div className="flex h-8 w-[30px] shrink-0 items-center justify-center border border-l-0 border-[#adadad] bg-[#e1e1e1]"><Caret /></div>
      </div>
      <div className="flex h-8 shrink-0 items-center border-b border-[#dadada]">
        <div className="flex w-[77px] shrink-0 items-center pl-[11px]"><Fit w={29} className="pt-[3px]">Sans</Fit><div className="ml-[5px] h-[18px] w-px bg-[#8c8c8c]" /><Fit w={14} className="ml-[5px] pt-[3px]">10</Fit></div>
        <Slot><BoldI /></Slot><Slot><ItalicI /></Slot><Slot><UnderI /></Slot><Sep />
        <Slot><AlignI k="l" /></Slot><Slot><AlignI k="c" /></Slot><Slot><AlignI k="r" /></Slot><Slot><CenterAcross /></Slot><Slot><MergeI /></Slot><Slot><SplitI /></Slot><Sep />
        <Slot><MoneyI /></Slot><Slot><PercentI /></Slot><Slot><Ico><rect x="8" y="9" width="2" height="2" fill="#111" /></Ico></Slot><Slot><DecI plus /></Slot><Slot><DecI /></Slot><Sep />
        <Slot><IndentI /></Slot><Slot><IndentI right /></Slot><Sep />
        <Slot><SupI /></Slot><Slot><SupI sub /></Slot><Sep />
        <Slot><BorderI /></Slot><Caret /><Slot><div className="pb-[3px]"><BucketI /></div></Slot><div className="w-px" /><Caret /><div className="w-px" />
        <Slot><span className="pb-1 font-['Liberation_Serif',serif] text-[18px] font-bold leading-5">A</span></Slot><Caret />
      </div>
      <div className="flex h-8 shrink-0 items-center border-b border-[#dadada]">
        {T3.map((icon, i) => <Slot key={i}>{icon}</Slot>)}
      </div>
      <div className="flex h-[38px] shrink-0 items-center border-b border-[#e3e3e3]">
        <div className="flex h-[22px] w-[156px] shrink-0 items-center justify-between border border-[#7a7a7a] pl-[1px] pr-[3px]">
          <Fit w={15} className="pt-[2px]">B6</Fit>
          <Ico><circle cx="12" cy="9.500" r="5.500" fill="#e5b80b" stroke="#927300" /><path d="M1.500 7H7V3.500L13 9.500L7 15.500V12H1.500Z" fill="#83b92f" stroke="#375d12" /></Ico>
        </div>
        <Ico s={24} className="ml-[8px]"><path d="M3.500 5.500L7 2L12 8L17.500 2.500L20.500 6L15.500 11.500L20.500 18L16.500 21L12 15.500L7 21L3.500 17.500L8.500 11.500Z" fill="#f5aaa6" stroke="#e09a96" /></Ico>
        <Ico s={26} className="ml-[12px]"><path d="M1.500 12.500L10.500 5.500V9.500H17V2.500H24V15.500H10.500V19.500Z" fill="#bcd4ea" stroke="#9ab8d8" /><path d="M18 3.500H23V14.500" stroke="#e5eff8" fill="none" /></Ico>
        <div className="ml-[6px] h-5"><Caret color="#666" /></div>
        <div className="ml-[14px] flex w-3 flex-col gap-1"><div className="h-[2px] bg-black" /><div className="h-[2px] bg-black" /></div>
        <div className="ml-[13px] flex h-[22px] flex-1 items-center border border-[#7a7a7a] pl-[2px]"><Fit w={187} className="pt-[2px]">=exp((0.382772*A6)-(762.441))</Fit></div>
      </div>
      <div className="flex h-[503px] shrink-0 bg-[#f0f0f0]">
        <Sheet />
        <div className="ml-px flex w-4 flex-col items-center pt-[24px]">
          <Chev d="M1 7L5 3L9 7" /><div className="mt-[3px] h-[451px] w-[15px] bg-[#cdcdcd]" /><Chev d="M1 3L5 7L9 3" className="mt-[2px]" />
        </div>
      </div>
      <div className="flex h-[15px] shrink-0 items-center bg-[#f0f0f0] pl-[54px]">
        <Chev d="M7 1L3 5L7 9" /><div className="ml-[3px] h-[15px] w-[1268px] bg-[#cdcdcd]" /><Chev d="M3 1L7 5L3 9" className="ml-[2px]" />
      </div>
      <div className="flex h-[31px] shrink-0 bg-[#f0f0f0] pt-px">
        <div className="flex h-[22px] w-[159px] items-center border border-l-[#ddd] border-t-[#d0d0d0] border-r-[#d0d0d0] border-b-white bg-white pl-[4px] pt-[2px] font-bold"><Fit w={148}>digitalUniverseSize.csv</Fit></div>
        <div className="h-px w-[404px] bg-[#d0d0d0]" />
        <div className="ml-px h-[29px] w-[528px] border border-[#bcbcbc] bg-[#e6e6e6]" />
        <div className="ml-[2px] flex h-[29px] w-[190px] items-center border border-[#dcdcdc] bg-white pl-[13px] pt-[2px]"><Fit w={160}>Sum = 318793.8708425584</Fit></div>
      </div>
      <Taskbar />
    </div>
  );
}
